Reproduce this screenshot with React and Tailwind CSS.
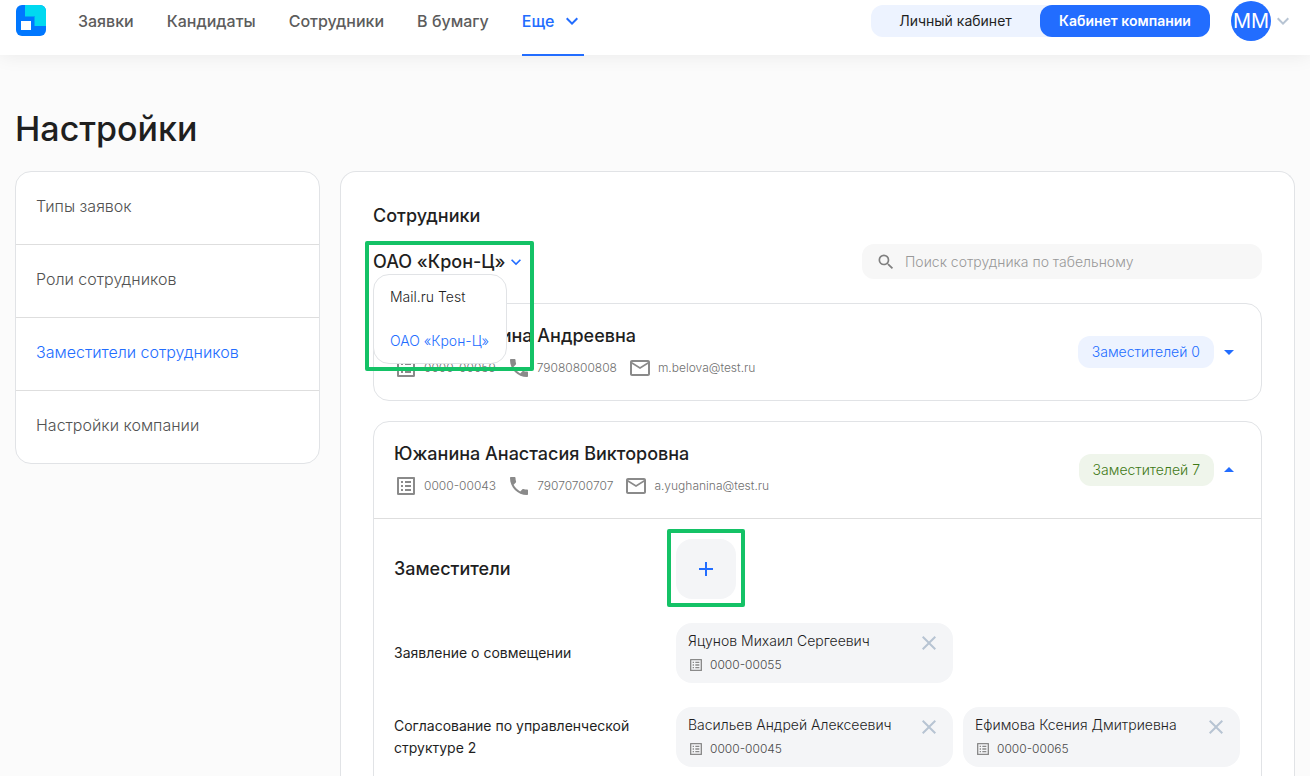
import React, { useState } from "react";
import {
    MdAdd,
    MdArrowDropDown,
    MdArrowDropUp,
    MdClose,
    MdKeyboardArrowDown,
    MdOutlineEmail,
    MdOutlineListAlt,
    MdPhone,
    MdSearch,
} from "react-icons/md";

const navItems = ["Заявки", "Кандидаты", "Сотрудники", "В бумагу"];

const menuItems = [
    { id: 1, title: "Типы заявок" },
    { id: 2, title: "Роли сотрудников" },
    { id: 3, title: "Заместители сотрудников", active: true },
    { id: 4, title: "Настройки компании" },
];

const companies = ["Mail.ru Test", "ОАО «Крон-Ц»"];

const employees = [
    {
        id: 1,
        name: "Белова Марина Андреевна",
        number: "0000-00059",
        phone: "79080800808",
        email: "m.belova@test.ru",
        count: 0,
        groups: [],
    },
    {
        id: 2,
        name: "Южанина Анастасия Викторовна",
        number: "0000-00043",
        phone: "79070700707",
        email: "a.yughanina@test.ru",
        count: 7,
        groups: [
            {
                title: "Заявление о совмещении",
                people: [{ name: "Яцунов Михаил Сергеевич", number: "0000-00055" }],
            },
            {
                title: "Согласование по управленческой структуре 2",
                people: [
                    { name: "Васильев Андрей Алексеевич", number: "0000-00045" },
                    { name: "Ефимова Ксения Дмитриевна", number: "0000-00065" },
                ],
            },
        ],
    },
];

const Logo = () => {
    return (
        <svg viewBox="0 0 30 31" className="w-[30px] h-[31px]" role="img" aria-label="Логотип">
            <clipPath id="logo-shape">
                <rect width="30" height="31" rx="6" />
            </clipPath>
            <g clipPath="url(#logo-shape)">
                <rect width="30" height="31" fill="#0077ff" />
                <path d="M9 0h21v21H19v-9H9z" fill="#00d9f0" />
                <path d="M9 11h10v10h-1v-9H9z" fill="#00a8f5" />
                <rect x="5" y="16" width="10" height="9" fill="#ffffff" />
            </g>
        </svg>
    );
};

const Header = () => {
    return (
        <header className="relative h-[55px] bg-white shadow-[0_0_20px_rgba(0,0,0,0.08)]">
            <div className="h-[42px] pl-4 pr-[15px] flex justify-between items-center">
                <div className="flex items-center gap-8">
                    <a href="#home" className="h-8 flex items-start"><Logo /></a>
                    <nav className="flex items-center gap-[33px] text-base font-medium text-[#5c5c5c]">
                        {navItems.map((item) => (
                            <a key={item} href="#nav">{item}</a>
                        ))}
                        <button className="relative h-[42px] flex items-center gap-[6px] text-[#226dff] after:absolute after:inset-x-0 after:top-[54px] after:h-[2px] after:bg-[#226dff]">
                            Еще
                            <MdKeyboardArrowDown className="size-6" />
                        </button>
                    </nav>
                </div>
                <div className="flex items-center">
                    <div className="flex h-8 mr-[21px] rounded-xl bg-[#edf3ff] text-sm">
                        <button className="w-[169px] text-[#1f1f1f]">Личный кабинет</button>
                        <button className="w-[170px] rounded-xl bg-[#226dff] font-semibold text-white">Кабинет компании</button>
                    </div>
                    <button className="flex items-center" aria-label="Профиль">
                        <span className="size-10 rounded-full bg-[#226dff] flex justify-center items-center text-xl text-white">ММ</span>
                        <MdKeyboardArrowDown className="size-6 text-[#b7c4d3]" />
                    </button>
                </div>
            </div>
        </header>
    );
};

const Sidebar = () => {
    return (
        <nav className="w-[305px] shrink-0 self-start bg-white border border-[#e1e3e6] rounded-2xl divide-y divide-[#dedede]">
            {menuItems.map((item) => (
                <a
                    key={item.id}
                    href="#settings"
                    className={`block px-5 pt-[22px] pb-[26px] text-base leading-6 font-light ${item.active ? "text-[#226dff]" : "text-[#525252]"}`}
                >
                    {item.title}
                </a>
            ))}
        </nav>
    );
};

const CompanySelect = () => {
    const [company, setCompany] = useState("ОАО «Крон-Ц»");
    const [open, setOpen] = useState(true);

    return (
        <div className="relative z-10">
            <button
                onClick={() => setOpen(!open)}
                aria-haspopup="listbox"
                aria-expanded={open}
                className="flex items-center text-lg leading-6 font-medium text-[#1f1f1f]"
            >
                {company}
                <MdKeyboardArrowDown className="size-5 text-[#226dff]" />
            </button>
            {open && (
                <ul role="listbox" className="absolute left-0 top-full w-[134px] h-[90px] bg-white border border-[#e1e3e6] rounded-2xl">
                    {companies.map((item) => (
                        <li key={item} role="option" aria-selected={item === company}>
                            <button
                                onClick={() => setCompany(item)}
                                className={`h-11 px-4 text-sm font-light whitespace-nowrap ${item === company ? "text-[#226dff]" : "text-[#1f1f1f]"}`}
                            >
                                {item}
                            </button>
                        </li>
                    ))}
                </ul>
            )}
            <span className="absolute -inset-x-2 -top-[9px] h-[130px] border-4 border-[#14c266] rounded-xs pointer-events-none"></span>
        </div>
    );
};

const Contact = ({ icon: Icon, children }) => {
    return (
        <span className="flex items-center gap-[6px]">
            <Icon className="size-6 text-[#8a8a8a]" />
            {children}
        </span>
    );
};

const Deputy = ({ name, number }) => {
    return (
        <div className="h-[60px] px-3 pt-2 rounded-2xl bg-[#f4f5f7] flex justify-between items-start">
            <div className="flex flex-col gap-1">
                <p className="text-sm font-light text-[#1f1f1f]">{name}</p>
                <p className="flex items-center gap-[6px] text-xs leading-5 font-light text-[#4a4a4a]">
                    <MdOutlineListAlt className="size-4 text-[#8a8a8a]" />
                    {number}
                </p>
            </div>
            <button aria-label="Удалить">
                <MdClose className="size-6 text-[#b7c4d3]" />
            </button>
        </div>
    );
};

const EmployeeCard = ({ employee }) => {
    const { name, number, phone, email, count, groups } = employee;
    const expanded = groups.length > 0;

    return (
        <section className="border border-[#e1e3e6] rounded-2xl">
            <div className="h-24 px-5 flex justify-between items-center">
                <div className="flex flex-col gap-2">
                    <h3 className="text-lg leading-6 font-medium text-[#1f1f1f]">{name}</h3>
                    <p className="flex items-center gap-[11px] text-xs font-light text-[#707070]">
                        <Contact icon={MdOutlineListAlt}>{number}</Contact>
                        <Contact icon={MdPhone}>{phone}</Contact>
                        <Contact icon={MdOutlineEmail}>{email}</Contact>
                    </p>
                </div>
                <button className="flex items-center gap-[3px]" aria-expanded={expanded}>
                    <span className={`h-8 px-[14px] rounded-xl flex items-center text-sm font-light ${expanded ? "bg-[#eff5eb] text-[#3f7a17]" : "bg-[#edf3ff] text-[#226dff]"}`}>
                        Заместителей {count}
                    </span>
                    {expanded ? <MdArrowDropUp className="size-6 text-[#226dff]" /> : <MdArrowDropDown className="size-6 text-[#226dff]" />}
                </button>
            </div>
            {expanded && (
                <div className="pl-5 pr-[21px] pt-5 pb-6 border-t border-[#dedede] flex flex-col gap-6">
                    <div className="flex items-center">
                        <h4 className="w-[282px] text-lg font-medium text-[#1f1f1f]">Заместители</h4>
                        <button className="relative size-[60px] rounded-2xl bg-[#f4f5f7] flex justify-center items-center" aria-label="Добавить">
                            <MdAdd className="size-6 text-[#226dff]" />
                            <span className="absolute -inset-x-[9px] -top-[10px] -bottom-2 border-4 border-[#14c266] rounded-xs pointer-events-none"></span>
                        </button>
                    </div>
                    {groups.map((group) => (
                        <div key={group.title} className="flex items-center">
                            <p className="w-[282px] pr-8 text-sm leading-[22px] text-[#1f1f1f]">{group.title}</p>
                            <div className="flex-1 grid grid-cols-2 gap-[10px]">
                                {group.people.map((person) => (
                                    <Deputy key={person.number} name={person.name} number={person.number} />
                                ))}
                            </div>
                        </div>
                    ))}
                </div>
            )}
        </section>
    );
};

const App = () => {
    return (
        <div className="min-h-screen flex flex-col bg-[#fbfbfb] font-['Inter',sans-serif]">
            <Header />
            <main className="flex-1 flex flex-col px-[15px] pt-[50px]">
                <h1 className="text-[34px] leading-[48px] font-medium text-[#1f1f1f]">Настройки</h1>
                <div className="flex-1 flex gap-5 mt-[18px]">
                    <Sidebar />
                    <div className="flex-1 flex flex-col px-8 pt-8 bg-white border border-b-0 border-[#e1e3e6] rounded-t-2xl">
                        <h2 className="text-lg leading-6 font-medium text-[#1f1f1f]">Сотрудники</h2>
                        <div className="mt-4 flex justify-between items-center">
                            <CompanySelect />
                            <label className="w-[400px] h-[35px] pl-[14px] flex items-center gap-[9px] rounded-xl bg-[#f7f7f7]">
                                <MdSearch className="size-5 text-[#808080]" />
                                <input
                                    type="text"
                                    aria-label="Поиск сотрудника"
                                    placeholder="Поиск сотрудника по табельному"
                                    className="flex-1 text-sm font-light outline-none placeholder:text-[#999999]"
                                />
                            </label>
                        </div>
                        <div className="mt-6 flex flex-col gap-5">
                            {employees.map((employee) => (
                                <EmployeeCard key={employee.id} employee={employee} />
                            ))}
                        </div>
                    </div>
                </div>
            </main>
        </div>
    );
};

export default App;
